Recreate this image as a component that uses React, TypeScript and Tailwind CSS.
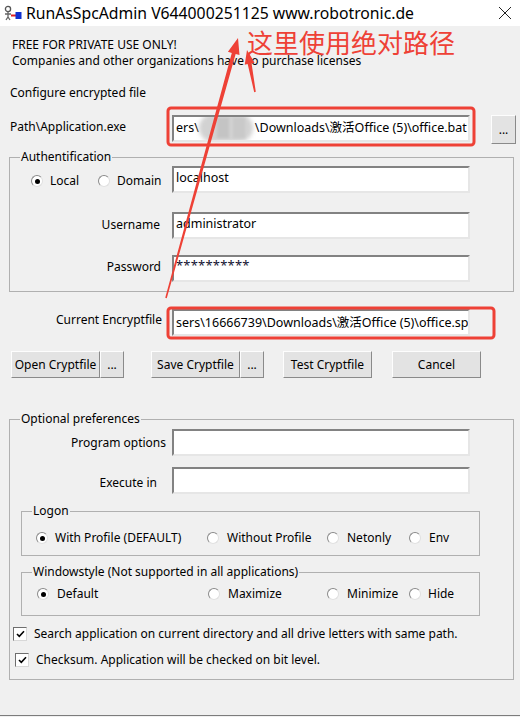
import React from "react";

const F = "font-['Noto_Sans','Noto_Sans_CJK_SC',sans-serif]";

function Input({ children, w = "w-[298px]", pt = "pt-[2px]" }: { children?: React.ReactNode; w?: string; pt?: string }) {
  return (
    <div
      className={`${w} h-[27px] shrink-0 bg-white border-2 border-t-[#828282] border-l-[#828282] border-b-[#e6e6e6] border-r-[#e6e6e6] px-[2px] ${pt} overflow-hidden whitespace-nowrap leading-[16px] text-[12.5px]`}
    >
      {children}
    </div>
  );
}

function Btn({ children, w }: { children: React.ReactNode; w: string }) {
  return (
    <div
      className={`${w} h-[27px] shrink-0 flex items-center justify-center bg-[#e3e3e3] border border-t-[#fdfdfd] border-l-[#fdfdfd] border-b-[#8a8a8a] border-r-[#8a8a8a]`}
    >
      {children}
    </div>
  );
}

function Radio({ on }: { on?: boolean }) {
  return (
    <span className="relative inline-flex w-[12px] h-[12px] shrink-0 rounded-full bg-white border border-t-[#8a8a8a] border-l-[#8a8a8a] border-b-[#e0e0e0] border-r-[#e0e0e0] items-center justify-center">
      {on && <span className="w-[5px] h-[5px] rounded-full bg-black" />}
    </span>
  );
}

function Check() {
  return (
    <span className="inline-flex w-[14px] h-[14px] shrink-0 bg-white border border-t-[#6e6e6e] border-l-[#6e6e6e] border-b-[#d8d8d8] border-r-[#d8d8d8] items-center justify-center">
      <svg width="9" height="8" viewBox="0 0 9 8">
        <path d="M1 4 L3.3 6.3 L8 1.3" stroke="#000" strokeWidth="1.6" fill="none" />
      </svg>
    </span>
  );
}

function Group({ title, className, children }: { title: string; className: string; children: React.ReactNode }) {
  return (
    <div className={`relative border border-[#b0b0b0] ${className}`}>
      <span className="absolute -top-[9px] left-[10px] bg-[#f0f0f0] px-[1px] leading-[16px]">{title}</span>
      {children}
    </div>
  );
}

export default function App() {
  return (
    <div className={`relative w-[520px] h-[717px] overflow-hidden bg-[#f0f0f0] ${F} text-[12px] leading-[16px] text-black`}>
      {/* Title bar */}
      <div className="h-[26px] bg-white flex items-center">
        <svg className="ml-[3px]" width="19" height="16" viewBox="0 0 19 16">
          <circle cx="5" cy="4" r="2.6" fill="none" stroke="#555" strokeWidth="1.3" />
          <path d="M5 6.5 V13 M2 9 H8 M3 15 L5 12 L7 15" stroke="#666" strokeWidth="1.3" fill="none" />
          <path d="M8 10.5 H13" stroke="#e02020" strokeWidth="2" />
          <rect x="12.5" y="7" width="6" height="7" fill="#1030d0" />
        </svg>
        <span className="ml-[4px] text-[15.75px] leading-[20px]">RunAsSpcAdmin V644000251125 www.robotronic.de</span>
        <svg className="ml-auto mr-[8px]" width="14" height="14" viewBox="0 0 14 14">
          <path d="M1 1 L13 13 M13 1 L1 13" stroke="#222" strokeWidth="1" />
        </svg>
      </div>

      <div className="pl-[12px] pt-[11px]">
        <div>FREE FOR PRIVATE USE ONLY!</div>
        <div>Companies and other organizations have to purchase licenses</div>
      </div>
      <div className="pl-[10px] mt-[16px]">Configure encrypted file</div>

      {/* Path row */}
      <div className="flex items-start mt-[14px]">
        <div className="w-[172px] pl-[10px] pt-[4px] shrink-0">Path\Application.exe</div>
        <Input pt="pt-[3px]">
          <span>ers\</span>
          <span className="relative inline-block w-[56px] h-[16px] align-top">
            <span className="absolute left-0 right-[2px] -top-[6px] h-[28px] rounded-[14px] bg-[#d2d2d2] blur-[2px]" />
            <span className="absolute left-[18px] w-[12px] -top-[2px] h-[20px] bg-[#c4c4c4] blur-[1px]" />
            <span className="absolute left-[34px] w-[12px] -top-[2px] h-[20px] bg-[#c9c9c9] blur-[1px]" />
          </span>
          <span>\Downloads\激活Office (5)\office.bat</span>
        </Input>
        <div className="ml-[21px]">
          <Btn w="w-[25px] !h-[29px]">...</Btn>
        </div>
      </div>

      {/* Authentification */}
      <Group title="Authentification" className="ml-[9px] w-[505px] h-[135px] mt-[13px]">
        <div className="flex items-start mt-[8px] ml-[162px] relative">
          <div className="absolute -left-[141px] top-[7px] flex items-center">
            <Radio on />
            <span className="ml-[7px] w-[48px]">Local</span>
            <Radio />
            <span className="ml-[7px]">Domain</span>
          </div>
          <Input>localhost</Input>
        </div>
        <div className="flex items-start mt-[19px]">
          <div className="w-[162px] shrink-0 text-right pr-[12px] pt-[5px]">Username</div>
          <Input>administrator</Input>
        </div>
        <div className="flex items-start mt-[16px]">
          <div className="w-[162px] shrink-0 text-right pr-[11px] pt-[4px]">Password</div>
          <Input pt="pt-[0px]">
            <span className="text-[13px] tracking-[0.2px] text-[#101030]">**********</span>
          </Input>
        </div>
      </Group>

      {/* Current Encryptfile */}
      <div className="flex items-start mt-[17px]">
        <div className="w-[172px] shrink-0 text-right pr-[10px] pt-[3px]">Current Encryptfile</div>
        <Input pt="pt-[4px]">sers\16666739\Downloads\激活Office (5)\office.sp</Input>
      </div>

      {/* Buttons */}
      <div className="flex items-start mt-[15px] pl-[11px]">
        <Btn w="w-[89px]">Open Cryptfile</Btn>
        <Btn w="w-[24px]">...</Btn>
        <div className="ml-[27px] flex">
          <Btn w="w-[89px]">Save Cryptfile</Btn>
          <Btn w="w-[24px]">...</Btn>
        </div>
        <div className="ml-[19px]">
          <Btn w="w-[89px]">Test Cryptfile</Btn>
        </div>
        <div className="ml-[20px]">
          <Btn w="w-[89px]">Cancel</Btn>
        </div>
      </div>

      {/* Optional preferences */}
      <Group title="Optional preferences" className="ml-[9px] w-[505px] h-[261px] mt-[41px]">
        <div className="flex items-start mt-[9px]">
          <div className="w-[162px] shrink-0 text-right pr-[6px] pt-[6px]">Program options</div>
          <Input />
        </div>
        <div className="flex items-start mt-[11px]">
          <div className="w-[162px] shrink-0 text-right pr-[15px] pt-[8px]">Execute in</div>
          <Input />
        </div>

        <Group title="Logon" className="ml-[11px] w-[459px] h-[45px] mt-[17px]">
          <div className="flex items-center mt-[18px] pl-[14px]">
            <div className="w-[171px] flex items-center">
              <Radio on />
              <span className="ml-[7px]">With Profile (DEFAULT)</span>
            </div>
            <div className="w-[120px] flex items-center">
              <Radio />
              <span className="ml-[8px]">Without Profile</span>
            </div>
            <div className="w-[82px] flex items-center">
              <Radio />
              <span className="ml-[8px]">Netonly</span>
            </div>
            <div className="flex items-center">
              <Radio />
              <span className="ml-[8px]">Env</span>
            </div>
          </div>
        </Group>

        <Group title="Windowstyle (Not supported in all applications)" className="ml-[11px] w-[459px] h-[44px] mt-[16px]">
          <div className="flex items-center mt-[13px] pl-[15px]">
            <div className="w-[171px] flex items-center">
              <Radio on />
              <span className="ml-[8px]">Default</span>
            </div>
            <div className="w-[119px] flex items-center">
              <Radio />
              <span className="ml-[8px]">Maximize</span>
            </div>
            <div className="w-[82px] flex items-center">
              <Radio />
              <span className="ml-[8px]">Minimize</span>
            </div>
            <div className="flex items-center">
              <Radio />
              <span className="ml-[7px]">Hide</span>
            </div>
          </div>
        </Group>

        <div className="flex items-center mt-[10px] pl-[3px]">
          <Check />
          <span className="ml-[7px]">Search application on current directory and all drive letters with same path.</span>
        </div>
        <div className="flex items-center mt-[10px] pl-[5px]">
          <Check />
          <span className="ml-[7px]">Checksum. Application will be checked on bit level.</span>
        </div>
      </Group>

      <div className="mt-[35px] h-[1px] bg-[#7c7c7c]" />

      {/* Annotation overlay */}
      <svg className="absolute left-0 top-0 pointer-events-none" width="520" height="717" viewBox="0 0 520 717">
        <rect x="168" y="108" width="306" height="37" rx="3" fill="none" stroke="#ee4136" strokeWidth="3" />
        <rect x="168" y="308" width="326" height="30" rx="3" fill="none" stroke="#ee4136" strokeWidth="3" />
        <polygon
          points="166.77,298.21 235.66,53.95 239.51,55.02 238,38 227.95,51.82 231.8,52.89 165.23,297.79"
          fill="#ee4136"
        />
        <polygon
          points="255.79,91.85 251.58,63.38 254.53,62.81 247,50 244.71,64.69 247.66,64.12 254.21,92.15"
          fill="#ee4136"
        />
      </svg>
      <div className="absolute left-[247px] top-[29px] text-[26px] leading-[26px] text-[#ee4136] font-['Noto_Sans_CJK_SC',sans-serif]">
        这里使用绝对路径
      </div>
    </div>
  );
}
